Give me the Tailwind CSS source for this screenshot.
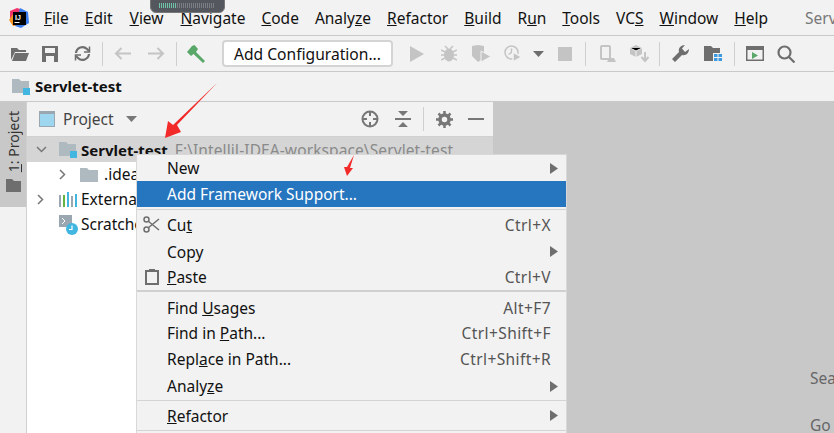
<!DOCTYPE html>
<html lang="en" class="overflow-hidden">
<head>
<meta charset="UTF-8">
<title>Servlet-test</title>
<script src="https://cdn.jsdelivr.net/npm/@tailwindcss/browser@4"></script>
</head>
<body class="w-[834px] h-[433px] overflow-hidden relative bg-[#f2f2f2] text-[15.5px] text-[#111] whitespace-nowrap font-['Noto_Sans','Open_Sans',sans-serif]">

<!-- menu bar -->
<div class="h-[36px] flex items-center border-b border-[#c9c9c9] relative overflow-hidden">
  <svg class="absolute left-[9px] top-[8px]" width="20" height="20" viewBox="0 0 20 20">
    <path d="M1 3 L8 0 L14 2 L5 18 L1 13Z" fill="#f0336b"/><path d="M11 0 L19 4 L20 15 L12 20 L6 18Z" fill="#3b7df0"/><path d="M0 12 L4 6 L8 17 L4 18Z" fill="#f79320"/>
    <rect x="4" y="4" width="13" height="13" fill="#000"/><rect x="5.500" y="14" width="5" height="1" fill="#fff"/>
    <text x="6" y="11.500" font-size="7" font-weight="700" fill="#fff" font-family="Liberation Sans">IJ</text>
  </svg>
  <div class="absolute left-[150px] -top-[4px] w-[75px] h-[17px] rounded-b-md bg-[#54585e] border border-[#777] flex items-start pt-[6px] pl-[8px]">
    <i class="w-[18px] h-[5px] bg-[repeating-linear-gradient(90deg,#6fc3a6_0_1px,#54585e_1px_2px)]"></i>
    <i class="w-[37px] h-[5px] bg-[repeating-linear-gradient(90deg,#7b7f85_0_1px,#54585e_1px_2px)]"></i>
  </div>
  <div class="flex pl-[44px] gap-[16px] pt-[2px]">
    <span><u>F</u>ile</span><span><u>E</u>dit</span><span class="ml-[1px]"><u>V</u>iew</span><span class="ml-[1px]"><u>N</u>avigate</span><span><u>C</u>ode</span><span>Analy<u>z</u>e</span><span><u>R</u>efactor</span><span><u>B</u>uild</span><span>R<u>u</u>n</span><span><u>T</u>ools</span><span>VC<u>S</u></span><span><u>W</u>indow</span><span><u>H</u>elp</span>
  </div>
  <span class="absolute left-[805px] top-[7px] text-[#777]">Servlet-test</span>
</div>

<!-- toolbar -->
<div class="h-[36px] flex items-center border-b border-[#c9c9c9] pl-[10px]">
  <svg class="w-[20px] h-[16px] mr-[12px]" viewBox="0 0 20 16"><path d="M1 14V2h6l2 2h7v2H5L1 14Z" fill="#6e6e6e"/><path d="M5 7h14l-3 8H2Z" fill="#6e6e6e"/></svg>
  <svg class="w-[16px] h-[16px] mr-[16px]" viewBox="0 0 16 16"><path fill-rule="evenodd" d="M0 0h16v16H0ZM3 2v5h10V2ZM4 10v6h8v-6Z" fill="#6e6e6e"/></svg>
  <svg class="w-[17px] h-[17px] mr-[11px]" viewBox="0 0 17 17" fill="none" stroke="#6e6e6e" stroke-width="2.200"><path d="M2 8a6.500 6.500 0 0 1 11-4l2 2"/><path d="M15 9a6.500 6.500 0 0 1-11 4l-2-2"/><path d="M15.500 1.500V7h-5.500M1.500 15.500V10h5.500" stroke-width="1.500"/></svg>
  <i class="w-px h-[24px] bg-[#cfcfcf] mr-[11px]"></i>
  <svg class="w-[17px] h-[13px] mr-[17px]" viewBox="0 0 17 13" fill="none" stroke="#c4c4c4" stroke-width="2"><path d="M17 6.500H2M7.500 1 2 6.500 7.500 12"/></svg>
  <svg class="w-[17px] h-[13px] mr-[11px]" viewBox="0 0 17 13" fill="none" stroke="#c4c4c4" stroke-width="2"><path d="M0 6.500h15M9.500 1 15 6.500 9.500 12"/></svg>
  <i class="w-px h-[24px] bg-[#cfcfcf] mr-[10px]"></i>
  <svg class="w-[20px] h-[18px] mr-[15px]" viewBox="0 0 20 18"><path d="M0 7 L5 1 L7.500 0 L11 4 L9 7 L18 16 L16 18 L6.500 9 L4 11Z" fill="#59a869"/></svg>
  <div class="w-[171px] h-[27px] rounded-[4px] border-2 border-[#d4d4d4] bg-white flex items-center justify-center pt-[3px] text-[15.6px]">Add Configuration...</div>
  <svg class="w-[14px] h-[16px] ml-[17px] mr-[17px]" viewBox="0 0 14 16"><path d="M0 0 14 8 0 16Z" fill="#c4c4c4"/></svg>
  <svg class="w-[16px] h-[17px] mr-[15px]" viewBox="0 0 16 17"><ellipse cx="8" cy="10" rx="5" ry="6.500" fill="#c4c4c4"/><path d="M0 5l4 2M16 5l-4 2M0 10h3M16 10h-3M0 15l4-2M16 15l-4-2M4 1l3 3M12 1 9 4" stroke="#c4c4c4" stroke-width="1.500"/></svg>
  <svg class="w-[19px] h-[17px] mr-[13px]" viewBox="0 0 19 17"><path d="M0 1 6 0l6 1v7l-3 7-3 2-6-6Z" fill="#c4c4c4"/><path d="M9 6l10 5.500L9 17Z" fill="#c4c4c4" stroke="#f2f2f2"/></svg>
  <svg class="w-[19px] h-[17px] mr-[10px]" viewBox="0 0 19 17" fill="none" stroke="#c4c4c4" stroke-width="1.500"><circle cx="7.500" cy="7.500" r="6.500"/><path d="M7.500 3.500v4l-3 2"/><path d="M9 7l9 5-9 5Z" fill="#c4c4c4" stroke="#f2f2f2"/></svg>
  <svg class="w-[11px] h-[6px] mr-[14px]" viewBox="0 0 11 6"><path d="M0 0h11L5.500 6Z" fill="#6e6e6e"/></svg>
  <i class="w-[14px] h-[14px] bg-[#c4c4c4] mr-[13px]"></i>
  <i class="w-px h-[24px] bg-[#cfcfcf] mr-[14px]"></i>
  <svg class="w-[16px] h-[17px] mr-[14px]" viewBox="0 0 16 17" fill="none" stroke="#c4c4c4" stroke-width="2"><rect x="1" y="1" width="9" height="13" rx="1"/><path d="M7 17l2-4h5l2 4Z" fill="#c4c4c4" stroke="none"/></svg>
  <svg class="w-[19px] h-[18px] mr-[10px]" viewBox="0 0 19 18"><path d="M6 0l6 3v6l-6 3-6-3V3Z" fill="#c4c4c4"/><path d="M0 3l6 3 6-3M6 6v6" stroke="#f2f2f2"/><path d="M15 7v8M11.500 12l3.500 4 3.500-4" stroke="#c4c4c4" stroke-width="2" fill="none"/></svg>
  <i class="w-px h-[24px] bg-[#cfcfcf] mr-[12px]"></i>
  <svg class="w-[17px] h-[17px] mr-[15px]" viewBox="0 0 17 17"><path d="M0 14 7 7C6 3 9 0 13 0L10 3.500 13 7 17 4C17 8 14 11 10 10L3 17Z" fill="#6e6e6e"/></svg>
  <svg class="w-[18px] h-[15px] mr-[12px]" viewBox="0 0 18 15"><path d="M0 0h7l2 2h7v5H9v8H0Z" fill="#6e6e6e"/><path d="M10 8h3.500v3H10ZM14.500 8H18v3h-3.500ZM10 12h3.500v3H10ZM14.500 12H18v3h-3.500Z" fill="#3d9ae0"/></svg>
  <i class="w-px h-[24px] bg-[#cfcfcf] mr-[11px]"></i>
  <svg class="w-[18px] h-[15px] mr-[13px]" viewBox="0 0 18 15"><path fill-rule="evenodd" d="M0 0h18v15H0ZM1.500 4v9.500h15V4Z" fill="#6e6e6e"/><path d="M6 6l6 3.500L6 13Z" fill="#59a869"/></svg>
  <svg class="w-[18px] h-[18px]" viewBox="0 0 18 18" fill="none" stroke="#6e6e6e" stroke-width="2.200"><circle cx="7.500" cy="7.500" r="6"/><path d="M12 12l5.500 5.500"/></svg>
</div>

<!-- navigation bar -->
<div class="h-[30px] flex items-center border-b border-[#c9c9c9] pl-[12px] gap-[4px] font-bold text-[15px]">
  <svg class="w-[19px] h-[16px]" viewBox="0 0 19 16"><path d="M0 0h7l2 2h8v12H0Z" fill="#afb9c0"/><rect x="11" y="9" width="7" height="7" fill="#40b6e0"/></svg>
  <span>Servlet-test</span>
</div>

<!-- main area -->
<div class="flex h-[331px]">
  <div class="w-[27px] border-r border-[#d0d0d0]">
    <div class="h-[105px] bg-[#c8c8c8] flex flex-col items-center pt-[9px]">
      <span class="[writing-mode:vertical-rl] rotate-180 text-[14px] text-[#333]"><u>1</u>: Project</span>
      <svg class="w-[15px] h-[13px] mt-[7px]" viewBox="0 0 15 13"><path d="M0 0h6l2 2h7v11H0Z" fill="#6e6e6e"/></svg>
    </div>
  </div>
  <div class="w-[466px] bg-white">
    <div class="h-[35px] bg-[#f2f2f2] border-b border-[#d0d0d0] flex items-center pl-[12px] text-[#444]">
      <svg class="w-[16px] h-[16px] mr-[8px]" viewBox="0 0 16 16"><rect width="16" height="16" fill="#9aa7b0"/><rect x="1" y="3" width="14" height="12" fill="#9ed6ef"/></svg>
      <span class="w-[52px] pt-[2px]">Project</span>
      <svg class="w-[11px] h-[6px] ml-[11px] mr-[224px]" viewBox="0 0 11 6"><path d="M0 0h11L5.500 6Z" fill="#777"/></svg>
      <svg class="w-[18px] h-[18px] mr-[16px]" viewBox="0 0 18 18" fill="none" stroke="#777" stroke-width="2"><circle cx="9" cy="9" r="7.500"/><path d="M9 1v5M9 12v5M1 9h5M12 9h5"/></svg>
      <svg class="w-[16px] h-[16px] mr-[12px]" viewBox="0 0 16 16"><path d="M0 8h16" stroke="#777" stroke-width="2"/><path d="M3 0h10L8 5ZM3 16h10l-5-5Z" fill="#777"/></svg>
      <i class="w-px h-[24px] bg-[#cfcfcf] mr-[12px]"></i>
      <svg class="w-[17px] h-[17px] mr-[15px]" viewBox="0 0 17 17"><circle cx="8.500" cy="8.500" r="4.500" fill="none" stroke="#777" stroke-width="3.500"/><path d="M8.500 0v17M0 8.500h17M2.500 2.500l12 12M14.500 2.500l-12 12" stroke="#777" stroke-width="2.500" stroke-dasharray="3 11"/></svg>
      <i class="w-[16px] h-[2px] bg-[#777]"></i>
    </div>
    <div class="h-[25px] bg-[#d5d5d5] flex items-center pl-[9px]">
      <svg class="w-[11px] h-[7px] mr-[12px]" viewBox="0 0 11 7" fill="none" stroke="#777" stroke-width="1.500"><path d="M1 1l4.500 4.500L10 1"/></svg>
      <svg class="w-[19px] h-[16px] mr-[3px]" viewBox="0 0 19 16"><path d="M0 0h7l2 2h8v12H0Z" fill="#afb9c0"/><rect x="11" y="9" width="7" height="7" fill="#40b6e0"/></svg>
      <span class="font-bold text-[15px] pt-[2px]">Servlet-test</span>
      <span class="ml-[7px] pt-[2px] text-[#8a8a8a] tracking-[0.1px]">F:\IntelliJ-IDEA-workspace\Servlet-test</span>
    </div>
    <div class="h-[25px] flex items-center pl-[32px]">
      <svg class="w-[7px] h-[11px] mr-[14px]" viewBox="0 0 7 11" fill="none" stroke="#777" stroke-width="1.500"><path d="M1 1l4.500 4.500L1 10"/></svg>
      <svg class="w-[18px] h-[14px] mr-[6px]" viewBox="0 0 18 14"><path d="M0 0h7l2 2h9v12H0Z" fill="#afb9c0"/></svg>
      <span class="w-[33px] overflow-hidden">.idea</span>
    </div>
    <div class="h-[25px] flex items-center pl-[10px]">
      <svg class="w-[7px] h-[11px] mr-[15px]" viewBox="0 0 7 11" fill="none" stroke="#777" stroke-width="1.500"><path d="M1 1l4.500 4.500L1 10"/></svg>
      <svg class="w-[18px] h-[15px] mr-[4px]" viewBox="0 0 18 15"><path d="M1 3v12" stroke="#9aa7b0" stroke-width="2"/><path d="M5 3v12" stroke="#62b543" stroke-width="2"/><path d="M9 0v15" stroke="#40b6e0" stroke-width="2"/><path d="M13 4v11" stroke="#9aa7b0" stroke-width="2"/><path d="M17 2v13" stroke="#40b6e0" stroke-width="2"/></svg>
      <span class="w-[56px] overflow-hidden">External Libraries</span>
    </div>
    <div class="h-[25px] flex items-center pl-[32px]">
      <svg class="w-[21px] h-[20px] mr-[1px]" viewBox="0 0 21 20"><rect y="0" width="13" height="12" fill="#9aa7b0"/><path d="M3 3l3 3-3 3" stroke="#fff" fill="none"/><circle cx="13" cy="14" r="6" fill="#40b6e0"/><path d="M13 10.500V14.500H10" stroke="#fff" stroke-width="1.200" fill="none"/></svg>
      <span class="w-[56px] overflow-hidden">Scratches</span>
    </div>
  </div>
  <div class="flex-1 bg-[#c8c8c8] relative text-[#666] overflow-hidden">
    <span class="absolute left-[317px] top-[265px]">Search Everywhere</span>
    <span class="absolute left-[317px] top-[312px]">Go to File</span>
  </div>
</div>

<!-- context menu -->
<div class="absolute left-[137px] top-[155px] w-[429px] h-[278px] overflow-hidden bg-[#f2f2f2] pt-[1px] outline outline-[#d8d8d8]">
  <div class="h-[25px] flex items-center justify-between pl-[30px] pr-[8px]"><span>New</span><svg class="w-[8px] h-[11px]" viewBox="0 0 8 11"><path d="M0 0l8 5.500L0 11Z" fill="#6e6e6e"/></svg></div>
  <div class="h-[26px] flex items-center pl-[30px] pt-[2px] bg-[#2675bf] text-white">Add Framework Support...</div>
  <div class="h-[3px] border-b border-[#d4d4d4]"></div>
  <div class="h-[27px] mt-[1px] flex items-center justify-between pl-[6px] pr-[15px]"><svg class="w-[17px] h-[17px] mr-[7px]" viewBox="0 0 17 17" fill="none" stroke="#6e6e6e" stroke-width="1.500"><circle cx="3.500" cy="3.500" r="2.500"/><circle cx="3.500" cy="13.500" r="2.500"/><path d="M5 5l11 9M5 12 16 3"/></svg><span class="flex-1 pt-[2px]">Cu<u>t</u></span><span class="text-[#555] tracking-[0.4px] pt-[2px]">Ctrl+X</span></div>
  <div class="h-[26px] flex items-center justify-between pl-[30px] pr-[8px]"><span class="pt-[4px]">Copy</span><svg class="w-[8px] h-[11px]" viewBox="0 0 8 11"><path d="M0 0l8 5.500L0 11Z" fill="#6e6e6e"/></svg></div>
  <div class="h-[26px] flex items-center justify-between pl-[8px] pr-[15px]"><svg class="w-[14px] h-[16px] mr-[8px]" viewBox="0 0 14 16" fill="none" stroke="#6e6e6e" stroke-width="2"><rect x="1" y="2" width="12" height="13"/><path d="M4 1.500h6" stroke-width="3"/></svg><span class="flex-1 pt-[2px]"><u>P</u>aste</span><span class="text-[#555] tracking-[0.4px] pt-[2px]">Ctrl+V</span></div>
  <div class="h-[2px] bg-[#d0d0d0]"></div>
  <div class="h-[26px] mt-[3px] flex items-center justify-between pl-[30px] pr-[15px]"><span class="pt-[2px]">Find <u>U</u>sages</span><span class="text-[#555] tracking-[0.4px] pt-[2px]">Alt+F7</span></div>
  <div class="h-[26px] flex items-center justify-between pl-[30px] pr-[15px]"><span>Find in <u>P</u>ath...</span><span class="text-[#555] tracking-[0.4px]">Ctrl+Shift+F</span></div>
  <div class="h-[26px] flex items-center justify-between pl-[30px] pr-[15px]"><span>Repl<u>a</u>ce in Path...</span><span class="text-[#555] tracking-[0.4px]">Ctrl+Shift+R</span></div>
  <div class="h-[26px] flex items-center justify-between pl-[30px] pr-[8px]"><span class="pt-[2px]">Analy<u>z</u>e</span><svg class="w-[8px] h-[11px]" viewBox="0 0 8 11"><path d="M0 0l8 5.500L0 11Z" fill="#6e6e6e"/></svg></div>
  <div class="h-[1px] bg-[#d4d4d4] mt-[1px]"></div>
  <div class="h-[29px] flex items-center justify-between pl-[30px] pr-[8px]"><span class="pt-[2px]"><u>R</u>efactor</span><svg class="w-[8px] h-[11px]" viewBox="0 0 8 11"><path d="M0 0l8 5.500L0 11Z" fill="#6e6e6e"/></svg></div>
  <div class="h-[1px] bg-[#d4d4d4]"></div>
</div>

<!-- red annotation arrows -->
<svg class="absolute left-0 top-0 pointer-events-none" width="834" height="433" viewBox="0 0 834 433">
  <path d="M217 83 L177 125 L181 132 L165 138 L168 121 L173 125Z" fill="#f32a2a"/>
  <path d="M354 155 L350 168 L353 168 L347 176 L344 167 L347 167Z" fill="#f32a2a"/>
</svg>
</body>
</html>
